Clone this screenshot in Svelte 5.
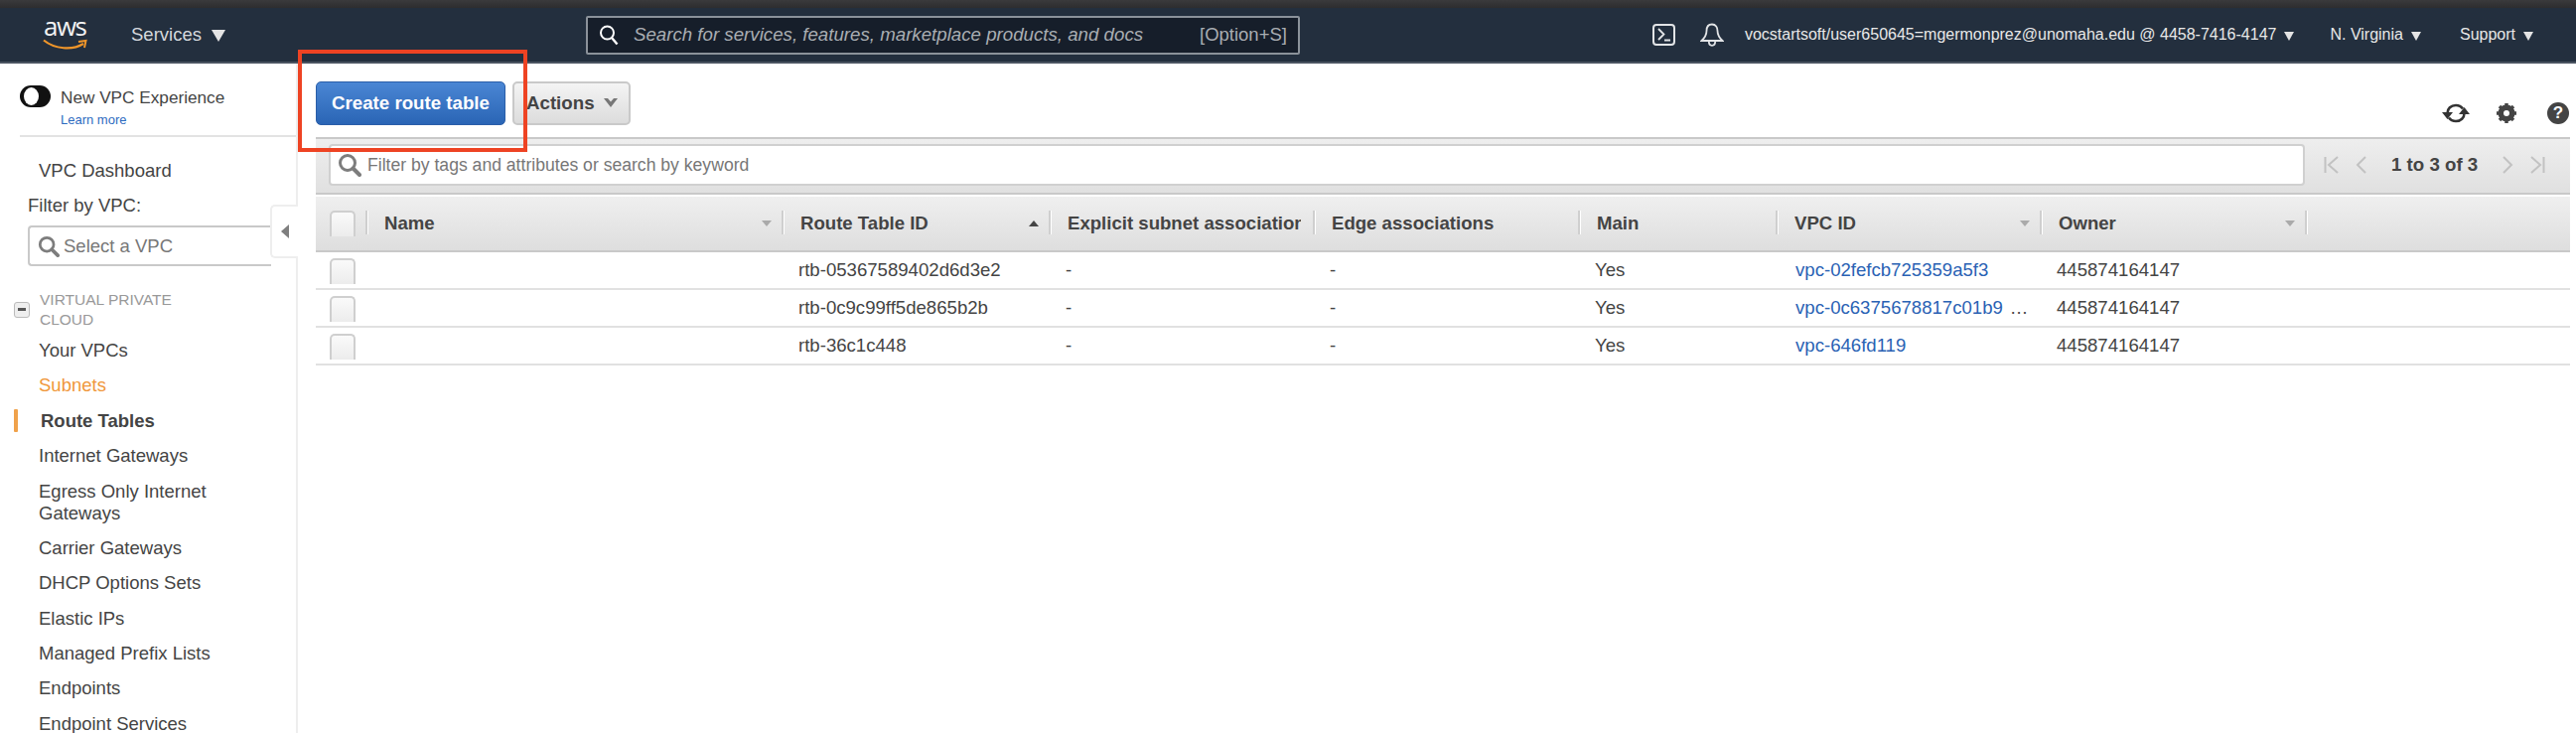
<script>
  const vpcItems = [
    { label: 'Your VPCs' },
    { label: 'Subnets', cls: 'orange' },
    { label: 'Route Tables', cls: 'active' },
    { label: 'Internet Gateways' },
    { label: 'Egress Only Internet Gateways', cls: 'multi' },
    { label: 'Carrier Gateways' },
    { label: 'DHCP Options Sets' },
    { label: 'Elastic IPs' },
    { label: 'Managed Prefix Lists' },
    { label: 'Endpoints' },
    { label: 'Endpoint Services' }
  ];

  const columns = [
    { label: 'Name', sort: 'down' },
    { label: 'Route Table ID', sort: 'up' },
    { label: 'Explicit subnet association' },
    { label: 'Edge associations' },
    { label: 'Main' },
    { label: 'VPC ID', sort: 'down' },
    { label: 'Owner', sort: 'down' }
  ];

  const rows = [
    { id: 'rtb-05367589402d6d3e2', vpc: 'vpc-02fefcb725359a5f3' },
    { id: 'rtb-0c9c99ff5de865b2b', vpc: 'vpc-0c6375678817c01b9', more: true },
    { id: 'rtb-36c1c448', vpc: 'vpc-646fd119' }
  ];
</script>

{#snippet lens(size)}
  <svg class="lens" width={size} height={size} viewBox="0 0 24 24">
    <circle cx="10" cy="10" r="7.500" fill="#fff" stroke="#7d7d7d" stroke-width="3" />
    <path d="M15.500 15.500 22 22" stroke="#7d7d7d" stroke-width="4" stroke-linecap="round" />
  </svg>
{/snippet}

<div class="page">
  <div class="strip"></div>
  <header class="nav">
    <div class="logo">
      <span class="logo-text">aws</span>
      <svg class="smile" width="46" height="13" viewBox="0 0 46 13">
        <path d="M1 1.500C12 10.500 30 12 41 5" fill="none" stroke="#f0962a" stroke-width="2.200" />
        <path d="M36 3 43.500 2 42 9" fill="none" stroke="#f0962a" stroke-width="2" />
      </svg>
    </div>
    <span class="services">Services</span>
    <span class="tri big"></span>
    <div class="search">
      <svg width="20" height="22" viewBox="0 0 20 22">
        <circle cx="8.500" cy="9" r="6.500" fill="none" stroke="#fff" stroke-width="2" />
        <path d="M13 14l5.500 6.500" stroke="#fff" stroke-width="2.400" />
      </svg>
      <span class="search-text">Search for services, features, marketplace products, and docs</span>
      <span class="search-key">[Option+S]</span>
    </div>
    <div class="nav-right">
      <svg class="term" width="23" height="22" viewBox="0 0 23 22">
        <rect x="1" y="1" width="21" height="20" rx="3" fill="none" stroke="#e2e4e6" stroke-width="2" />
        <path d="M6 5l5.500 5.500L6 16M12 16.500h6" fill="none" stroke="#e2e4e6" stroke-width="1.800" />
      </svg>
      <svg class="bell" width="24" height="24" viewBox="0 0 24 24">
        <path d="M12 1.500c-3.800 0-5.500 3-5.500 6.500 0 4-1.800 7-5 10h21c-3.200-3-5-6-5-10 0-3.500-1.700-6.500-5.500-6.500z" fill="none" stroke="#e2e4e6" stroke-width="1.800" />
        <path d="M8.800 18.500c0 2.800 1.300 4.300 3.200 4.300s3.200-1.500 3.200-4.300" fill="none" stroke="#e2e4e6" stroke-width="1.800" />
      </svg>
      <span class="account">vocstartsoft/user650645=mgermonprez@unomaha.edu @ 4458-7416-4147</span>
      <span class="tri"></span>
      <span class="region">N. Virginia</span>
      <span class="tri"></span>
      <span class="support">Support</span>
      <span class="tri"></span>
    </div>
  </header>

  <div class="body">
    <aside class="sidebar">
      <div class="experience">
        <span class="toggle"></span>
        <div>
          <div class="exp-title">New VPC Experience</div>
          <div class="learn">Learn more</div>
        </div>
      </div>
      <div class="side-item dashboard">VPC Dashboard</div>
      <div class="filter-label">Filter by VPC:</div>
      <div class="vpc-select">
        {@render lens(22)}
        <span>Select a VPC</span>
      </div>
      <div class="group">
        <span class="collapse"></span>
        <span class="group-label">VIRTUAL PRIVATE CLOUD</span>
      </div>
      {#each vpcItems as item}
        <div class="side-item {item.cls ?? ''}">{item.label}</div>
      {/each}
      <div class="handle"><span></span></div>
    </aside>

    <main class="main">
      <div class="top">
        <button class="primary">Create route table</button>
        <button class="actions">Actions
          <svg class="caret" width="14" height="9" viewBox="0 0 14 9"><path d="M0 0h4l3 3.500L10 0h4L7 9z" fill="#777" /></svg>
        </button>
        <div class="tools">
          <svg width="28" height="24" viewBox="0 0 28 24">
            <path d="M5.500 12c0-4.500 3.500-8 8.500-8 3 0 5.500 1.300 7 3.500M22.500 12c0 4.500-3.500 8-8.500 8-3 0-5.500-1.300-7-3.500" fill="none" stroke="#333" stroke-width="2.600" />
            <path d="M0 11h11l-5.500 7zM17 13h11l-5.500-7z" fill="#333" />
          </svg>
          <svg width="22" height="22" viewBox="0 0 22 22">
            <circle cx="11" cy="11" r="6" fill="none" stroke="#444" stroke-width="5" />
            <path d="M11 1v20M1 11h20M4 4l14 14M18 4 4 18" stroke="#444" stroke-width="3.500" />
            <circle cx="11" cy="11" r="3" fill="#fff" />
          </svg>
          <span class="help">?</span>
        </div>
      </div>

      <div class="toolbar">
        <div class="filter">
          {@render lens(24)}
          <span>Filter by tags and attributes or search by keyword</span>
        </div>
        <div class="pager">
          <svg width="16" height="18" viewBox="0 0 16 18"><path d="M1.500 1v16M14 1 5 9l9 8" fill="none" stroke="#c2c2c2" stroke-width="2" /></svg>
          <svg width="11" height="18" viewBox="0 0 11 18"><path d="M10 1 2 9l8 8" fill="none" stroke="#c2c2c2" stroke-width="2" /></svg>
          <b>1 to 3 of 3</b>
          <svg width="11" height="18" viewBox="0 0 11 18"><path d="M1 1l8 8-8 8" fill="none" stroke="#c2c2c2" stroke-width="2" /></svg>
          <svg width="16" height="18" viewBox="0 0 16 18"><path d="M14.500 1v16M2 1l9 8-9 8" fill="none" stroke="#c2c2c2" stroke-width="2" /></svg>
        </div>
      </div>

      <table class="grid">
        <colgroup>
          <col style="width:53px" /><col style="width:419px" /><col style="width:269px" /><col style="width:266px" />
          <col style="width:267px" /><col style="width:199px" /><col style="width:266px" /><col style="width:267px" /><col />
        </colgroup>
        <thead>
          <tr>
            <th class="check-cell"><span class="check"></span></th>
            {#each columns as col}
              <th>
                <span class="th-label">{col.label}</span>
                {#if col.sort}<span class="sort {col.sort}"></span>{/if}
              </th>
            {/each}
            <th></th>
          </tr>
        </thead>
        <tbody>
          {#each rows as row}
            <tr>
              <td class="check-cell"><span class="check"></span></td>
              <td></td>
              <td>{row.id}</td>
              <td>-</td>
              <td>-</td>
              <td>Yes</td>
              <td class="vpc"><a href="#top">{row.vpc}</a>{#if row.more}<span class="more">…</span>{/if}</td>
              <td>445874164147</td>
              <td></td>
            </tr>
          {/each}
        </tbody>
      </table>
      <div class="callout"></div>
    </main>
  </div>
</div>

<style>
  :global(body) {
    margin: 0;
    background: #fff;
    overflow: hidden;
  }

  .page {
    height: 738px;
    overflow: hidden;
    font-family: "Liberation Sans", Arial, sans-serif;
    color: #444;
  }

  .strip {
    height: 8px;
    background: linear-gradient(#3a3a3c, #2d2d2f);
  }

  .nav {
    box-sizing: border-box;
    height: 56px;
    display: flex;
    align-items: center;
    background: #232f3e;
    border-bottom: 2px solid #4a5461;
    color: #eee;
    padding-left: 43px;
  }

  .logo {
    width: 46px;
    height: 38px;
    position: relative;
    flex: none;
    margin-top: -6px;
  }

  .logo-text {
    display: block;
    font: 400 26px/26px "Open Sans", sans-serif;
    color: #f2f2f2;
    letter-spacing: -1.500px;
    padding-left: 1px;
  }

  .smile {
    position: absolute;
    left: 0;
    top: 26px;
  }

  .services {
    margin-left: 43px;
    font-size: 18.500px;
    color: #d5d9dd;
  }

  .tri {
    width: 0;
    height: 0;
    margin: 2px 0 0 8px;
    border-left: 5px solid transparent;
    border-right: 5px solid transparent;
    border-top: 9px solid #e4e4e4;
  }

  .tri.big {
    margin-left: 10px;
    border-left-width: 7px;
    border-right-width: 7px;
    border-top-width: 12px;
  }

  .search {
    box-sizing: border-box;
    width: 719px;
    height: 39px;
    margin-left: 363px;
    display: flex;
    align-items: center;
    padding: 0 11px;
    background: #161e2a;
    border: 2px solid #8b929a;
    border-radius: 2px;
  }

  .search-text {
    margin-left: 15px;
    font-style: italic;
    font-size: 18.700px;
    color: #a9adb2;
  }

  .search-key {
    margin-left: auto;
    font-size: 18.500px;
    color: #a9adb2;
  }

  .nav-right {
    display: flex;
    align-items: center;
    margin-left: 355px;
    font-size: 16px;
    color: #e8e8e8;
  }

  .bell {
    margin-left: 25px;
  }

  .account {
    margin-left: 21px;
  }

  .region {
    margin-left: 36px;
  }

  .support {
    margin-left: 39px;
  }

  .body {
    display: flex;
    align-items: flex-start;
  }

  .sidebar {
    box-sizing: border-box;
    width: 300px;
    height: 674px;
    flex: none;
    position: relative;
    border-right: 2px solid #eee;
    font-size: 18.500px;
  }

  .experience {
    display: flex;
    gap: 10px;
    margin-left: 20px;
    padding: 23px 0 7px;
    border-bottom: 2px solid #e3e3e3;
    font-size: 17.200px;
  }

  .toggle {
    box-sizing: border-box;
    width: 31px;
    height: 22px;
    margin-top: -1px;
    border-radius: 11px;
    background: #111;
    position: relative;
  }

  .toggle::after {
    content: "";
    position: absolute;
    left: 4px;
    top: 2px;
    width: 15px;
    height: 18px;
    border-radius: 50%;
    background: #fff;
  }

  .exp-title {
    line-height: 22px;
  }

  .learn {
    margin-top: 4px;
    font-size: 13px;
    line-height: 16px;
    color: #2d6bbf;
  }

  .side-item {
    padding: 6.700px 12px 6.700px 39px;
    line-height: 22px;
    color: #444;
  }

  .dashboard {
    margin-top: 16px;
  }

  .filter-label {
    margin: 6px 0 0 28px;
    line-height: 24px;
  }

  .vpc-select {
    box-sizing: border-box;
    width: 245px;
    height: 41px;
    margin: 8px 0 0 28px;
    display: flex;
    align-items: center;
    gap: 4px;
    padding-left: 8px;
    border: 2px solid #c9c9c9;
    border-right: none;
    border-radius: 4px 0 0 4px;
    color: #777;
  }

  .group {
    display: flex;
    align-items: center;
    gap: 10px;
    margin: 24px 0 3px 14px;
    color: #999;
    font-size: 15.500px;
    line-height: 20px;
  }

  .group-label {
    width: 150px;
  }

  .collapse {
    box-sizing: border-box;
    width: 16px;
    height: 16px;
    border: 1px solid #bbb;
    border-radius: 3px;
    background: #eee;
    position: relative;
  }

  .collapse::after {
    content: "";
    position: absolute;
    left: 3px;
    top: 5px;
    width: 8px;
    height: 3px;
    background: #555;
  }

  .orange {
    color: #f0973a;
  }

  .active {
    padding-left: 41px;
    font-weight: 700;
    position: relative;
  }

  .active::before {
    content: "";
    position: absolute;
    left: 14px;
    top: 6px;
    width: 4px;
    height: 23px;
    border-radius: 1px;
    background: #f0a24b;
  }

  .handle {
    position: absolute;
    left: 272px;
    top: 142px;
    box-sizing: border-box;
    width: 28px;
    height: 54px;
    display: flex;
    align-items: center;
    padding-left: 9px;
    background: #fff;
    border: 2px solid #eee;
    border-right: none;
    border-radius: 5px 0 0 5px;
  }

  .handle span {
    border-top: 7px solid transparent;
    border-bottom: 7px solid transparent;
    border-right: 8px solid #7f7f7f;
  }

  .main {
    flex: 1;
    min-width: 0;
    position: relative;
    padding: 18px 6px 0 18px;
  }

  .top {
    display: flex;
    align-items: flex-start;
    height: 56px;
  }

  button {
    box-sizing: border-box;
    height: 44px;
    font-family: inherit;
    font-size: 18.700px;
    font-weight: 700;
    border-radius: 5px;
  }

  .primary {
    width: 191px;
    padding: 0;
    color: #fff;
    background: linear-gradient(#4a86d4, #2a65b5);
    border: 1px solid #2a5ea8;
  }

  .actions {
    width: 119px;
    margin-left: 7px;
    padding: 0 0 0 12px;
    text-align: left;
    color: #444;
    background: linear-gradient(#f4f4f4, #dcdcdc);
    border: 2px solid #c9c9c9;
  }

  .caret {
    margin: 0 0 2px 4px;
  }

  .tools {
    margin-left: auto;
    display: flex;
    align-items: center;
    gap: 26px;
    margin-top: 20px;
    margin-right: 1px;
  }

  .help {
    width: 22px;
    height: 22px;
    margin-left: 4px;
    border-radius: 50%;
    background: #444;
    color: #fff;
    font-size: 17px;
    font-weight: 700;
    line-height: 22px;
    text-align: center;
  }

  .toolbar {
    box-sizing: border-box;
    height: 58px;
    display: flex;
    align-items: center;
    padding: 0 0 2px 13px;
    background: linear-gradient(#eee, #e0e0e0);
    border-top: 2px solid #c9c9c9;
    border-bottom: 2px solid #c9c9c9;
  }

  .filter {
    box-sizing: border-box;
    width: 1990px;
    height: 42px;
    display: flex;
    align-items: center;
    gap: 6px;
    padding-left: 7px;
    background: #fff;
    border: 2px solid #d0d0d0;
    border-radius: 4px;
    font-size: 17.600px;
    color: #777;
  }

  .pager {
    display: flex;
    align-items: center;
    margin-left: 19px;
    gap: 16px;
    font-size: 18.700px;
    color: #444;
  }

  .pager b {
    margin: 0 9px;
  }

  .grid {
    width: 100%;
    margin-top: 2px;
    table-layout: fixed;
    border-collapse: collapse;
    font-size: 18.600px;
  }

  th {
    height: 54px;
    padding: 0 0 0 16px;
    position: relative;
    text-align: left;
    background: linear-gradient(#efefef, #dedede);
    border-bottom: 2px solid #c9c9c9;
    color: #444;
    white-space: nowrap;
    overflow: hidden;
  }

  th::after {
    content: "";
    position: absolute;
    right: 0;
    top: 14px;
    width: 2px;
    height: 24px;
    background: #cfcfcf;
    border-right: 1px solid #fff;
  }

  th:last-child::after {
    display: none;
  }

  .th-label {
    display: block;
    overflow: hidden;
    margin-right: 15px;
  }

  .sort {
    position: absolute;
    right: 13px;
    top: 24px;
    border-left: 5px solid transparent;
    border-right: 5px solid transparent;
  }

  .sort.down {
    border-top: 6px solid #aaa;
  }

  .sort.up {
    border-bottom: 6px solid #444;
  }

  td {
    height: 36px;
    padding: 0 0 0 14px;
    border-bottom: 2px solid #e1e1e1;
    color: #444;
    white-space: nowrap;
    overflow: hidden;
  }

  .vpc {
    padding-left: 17px;
  }

  .vpc a {
    color: #2a62b4;
    text-decoration: none;
  }

  .more {
    margin-left: 7px;
  }

  th.check-cell,
  td.check-cell {
    padding: 0 0 0 14px;
  }

  .check {
    display: block;
    box-sizing: border-box;
    width: 26px;
    height: 26px;
    border: 2px solid #cfcfcf;
    border-bottom: none;
    border-radius: 5px 5px 0 0;
    background: linear-gradient(#fafafa, #ececec);
  }

  td .check {
    margin-top: 2px;
  }

  .callout {
    position: absolute;
    left: 0;
    top: -14px;
    box-sizing: border-box;
    width: 231px;
    height: 103px;
    border: 4px solid #ee4323;
    pointer-events: none;
  }
</style>
